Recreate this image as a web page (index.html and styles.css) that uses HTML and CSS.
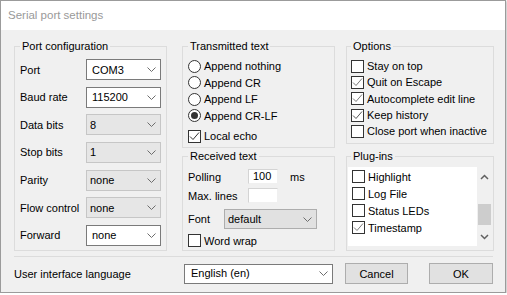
FILE: index.html
```html
<!DOCTYPE html>
<html lang="en">
<head>
  <meta charset="UTF-8">
  <title>Serial port settings</title>
  <link rel="stylesheet" href="styles.css">
</head>
<body>

  <div class="window">
    <div class="titlebar">Serial port settings</div>

    <div class="dialog">
      <div class="columns">

        <fieldset class="group group-port">
          <legend>Port configuration</legend>
          <div class="form-rows">
            <div class="form-row">
              <span class="label">Port</span>
              <div class="combo"><span>COM3</span><svg width="9" height="5" viewBox="0 0 9 5"><polyline points="0.5,0.5 4.5,4.5 8.5,0.5" fill="none" stroke="#6d6d6d"/></svg></div>
            </div>
            <div class="form-row">
              <span class="label">Baud rate</span>
              <div class="combo"><span>115200</span><svg width="9" height="5" viewBox="0 0 9 5"><polyline points="0.5,0.5 4.5,4.5 8.5,0.5" fill="none" stroke="#6d6d6d"/></svg></div>
            </div>
            <div class="form-row">
              <span class="label">Data bits</span>
              <div class="combo combo-off"><span>8</span><svg width="9" height="5" viewBox="0 0 9 5"><polyline points="0.5,0.5 4.5,4.5 8.5,0.5" fill="none" stroke="#6d6d6d"/></svg></div>
            </div>
            <div class="form-row">
              <span class="label">Stop bits</span>
              <div class="combo combo-off"><span>1</span><svg width="9" height="5" viewBox="0 0 9 5"><polyline points="0.5,0.5 4.5,4.5 8.5,0.5" fill="none" stroke="#6d6d6d"/></svg></div>
            </div>
            <div class="form-row">
              <span class="label">Parity</span>
              <div class="combo combo-off"><span>none</span><svg width="9" height="5" viewBox="0 0 9 5"><polyline points="0.5,0.5 4.5,4.5 8.5,0.5" fill="none" stroke="#6d6d6d"/></svg></div>
            </div>
            <div class="form-row">
              <span class="label">Flow control</span>
              <div class="combo combo-off"><span>none</span><svg width="9" height="5" viewBox="0 0 9 5"><polyline points="0.5,0.5 4.5,4.5 8.5,0.5" fill="none" stroke="#6d6d6d"/></svg></div>
            </div>
            <div class="form-row">
              <span class="label">Forward</span>
              <div class="combo"><span>none</span><svg width="9" height="5" viewBox="0 0 9 5"><polyline points="0.5,0.5 4.5,4.5 8.5,0.5" fill="none" stroke="#6d6d6d"/></svg></div>
            </div>
          </div>
        </fieldset>

        <div class="col col-mid">
          <fieldset class="group group-tx">
            <legend>Transmitted text</legend>
            <div class="option"><span class="radio"></span>Append nothing</div>
            <div class="option"><span class="radio"></span>Append CR</div>
            <div class="option"><span class="radio"></span>Append LF</div>
            <div class="option"><span class="radio on"></span>Append CR-LF</div>
            <div class="option echo">
              <span class="check"><svg width="11" height="11" viewBox="0 0 11 11"><polyline points="1,5.5 4,8.5 10,1.5" fill="none" stroke="#333"/></svg></span>Local echo
            </div>
          </fieldset>

          <fieldset class="group group-rx">
            <legend>Received text</legend>
            <div class="rx-row">
              <span class="rx-label">Polling</span>
              <span class="field">100</span>
              <span class="unit">ms</span>
            </div>
            <div class="rx-row rx-lines">
              <span class="rx-label">Max. lines</span>
              <span class="field"></span>
            </div>
            <div class="rx-row rx-font">
              <span class="rx-label font-label">Font</span>
              <div class="combo combo-btn"><span>default</span><svg width="9" height="5" viewBox="0 0 9 5"><polyline points="0.5,0.5 4.5,4.5 8.5,0.5" fill="none" stroke="#6d6d6d"/></svg></div>
            </div>
            <div class="option wrap"><span class="check"></span>Word wrap</div>
          </fieldset>
        </div>

        <div class="col col-right">
          <fieldset class="group group-options">
            <legend>Options</legend>
            <div class="option"><span class="check"></span>Stay on top</div>
            <div class="option"><span class="check"><svg width="11" height="11" viewBox="0 0 11 11"><polyline points="1,5.5 4,8.5 10,1.5" fill="none" stroke="#7a7a7a"/></svg></span>Quit on Escape</div>
            <div class="option"><span class="check"><svg width="11" height="11" viewBox="0 0 11 11"><polyline points="1,5.5 4,8.5 10,1.5" fill="none" stroke="#7a7a7a"/></svg></span>Autocomplete edit line</div>
            <div class="option"><span class="check"><svg width="11" height="11" viewBox="0 0 11 11"><polyline points="1,5.5 4,8.5 10,1.5" fill="none" stroke="#555"/></svg></span>Keep history</div>
            <div class="option"><span class="check"></span>Close port when inactive</div>
          </fieldset>

          <fieldset class="group group-plugins">
            <legend>Plug-ins</legend>
            <div class="listbox">
              <div class="list-items">
                <div class="list-item"><span class="check"></span>Highlight</div>
                <div class="list-item"><span class="check"></span>Log File</div>
                <div class="list-item"><span class="check"></span>Status LEDs</div>
                <div class="list-item"><span class="check"><svg width="11" height="11" viewBox="0 0 11 11"><polyline points="1,5.5 4,8.5 10,1.5" fill="none" stroke="#7a7a7a"/></svg></span>Timestamp</div>
              </div>
              <div class="scrollbar">
                <div class="scroll-btn"><svg width="9" height="6" viewBox="0 0 9 6"><polyline points="1,5 4.5,1.5 8,5" fill="none" stroke="#606060" stroke-width="1.5"/></svg></div>
                <div class="scroll-track"><div class="scroll-thumb"></div></div>
                <div class="scroll-btn"><svg width="9" height="6" viewBox="0 0 9 6"><polyline points="1,1 4.5,4.5 8,1" fill="none" stroke="#606060" stroke-width="1.5"/></svg></div>
              </div>
            </div>
          </fieldset>
        </div>

      </div>

      <div class="separator"></div>

      <div class="footer">
        <span class="footer-label">User interface language</span>
        <div class="combo combo-lang"><span>English (en)</span><svg width="9" height="5" viewBox="0 0 9 5"><polyline points="0.5,0.5 4.5,4.5 8.5,0.5" fill="none" stroke="#6d6d6d"/></svg></div>
        <button class="btn btn-cancel">Cancel</button>
        <button class="btn btn-ok">OK</button>
      </div>
    </div>
  </div>

</body>
</html>
```

FILE: styles.css
```css
* { box-sizing: border-box; }

body {
  margin: 0;
  font-family: "Liberation Sans", Arial, sans-serif;
  font-size: 11px;
  color: #000;
  background: #fff;
}

.window {
  width: 506px; height: 293px;
  border: 1px solid #9b9b9b;
  background: #f0f0f0;
  box-shadow: 1px 1px 2px rgba(0, 0, 0, 0.25);
}
.titlebar {
  height: 29px; line-height: 29px;
  padding-left: 7px;
  background: #fff; color: #999;
  font-size: 11.5px;
}
.dialog { padding: 10px 0 0 13px; }
.columns { display: flex; height: 211px; }
.col { display: flex; flex-direction: column; }
.col-mid { width: 153px; margin-left: 15px; gap: 2px; }
.col-right { width: 148px; margin-left: 11px; gap: 6px; }

/* group boxes */
.group {
  margin: 0; padding: 0 5px;
  border: 1px solid #dcdcdc;
  min-width: 0;
}
.group legend { padding: 0 2px; line-height: 13px; }
.group-port { width: 153px; height: 211px; padding-top: 6px; }
.group-tx { height: 108px; padding-top: 5px; }
.group-rx { height: 101px; padding-top: 6px; }
.group-options { height: 104px; padding: 5px 4px 0; }
.group-plugins { height: 101px; padding: 4px 1px 0; }
.group-plugins legend { margin-left: 3px; }

/* port configuration */
.form-rows { display: flex; flex-direction: column; gap: 6.67px; }
.form-row { display: flex; align-items: center; }
.label { width: 66px; }
.combo {
  display: flex; align-items: center; justify-content: space-between;
  width: 75px; height: 21px;
  padding: 0 4px 0 5px;
  background: #fff; border: 1px solid #7a7a7a;
}
.combo-off { background: #e6e6e6; border-color: #c6c6c6; padding-left: 3px; }
.combo-btn { width: 93px; height: 20px; background: #e1e1e1; border-color: #adadad; padding-left: 3px; }
.combo-lang { width: 149px; height: 20px; padding-left: 6px; }
.combo-lang span { margin-top: -1px; }

/* radios and checkboxes */
.option { display: flex; align-items: center; height: 16.5px; }
.group-options .option { height: 16.3px; }
.echo { margin-top: 4px; }
.wrap { margin-top: 5px; height: 13px; }
.radio, .check {
  flex: none;
  width: 13px; height: 13px;
  margin-right: 3px;
  border: 1px solid #333; background: #fff;
  display: flex; align-items: center; justify-content: center;
}
.radio { border-radius: 50%; }
.radio.on::after {
  content: ""; width: 7px; height: 7px;
  border-radius: 50%; background: #333;
}

/* received text */
.rx-row { display: flex; align-items: center; height: 15px; }
.rx-label { width: 60px; }
.rx-lines { margin-top: 4px; }
.rx-font { margin-top: 6px; height: 20px; }
.font-label { width: 36px; }
.field {
  width: 30px; height: 15px;
  padding-left: 4px; line-height: 13px;
  background: #fff;
  border: 1px solid #f0f0f0; border-top-color: #d4d4d4; border-left-color: #d4d4d4;
}
.unit { margin-left: 12px; }

/* plug-in list */
.listbox { display: flex; height: 79px; background: #fff; }
.list-items { flex: 1; padding: 1px 0 0 4px; }
.list-item { display: flex; align-items: center; height: 17px; }
.list-item .check { margin-right: 3px; }
.scrollbar { width: 15px; display: flex; flex-direction: column; background: #f0f0f0; }
.scroll-btn { height: 19px; display: flex; align-items: center; justify-content: center; }
.scroll-track { flex: 1; }
.scroll-thumb { margin: 18px 1px 0; height: 21px; background: #cdcdcd; }

/* bottom */
.separator { height: 1px; margin: 5px 12px 0 0; background: #dcdcdc; }
.footer { display: flex; align-items: center; margin-top: 6px; height: 21px; }
.footer-label { width: 170px; }
.btn {
  height: 21px; padding: 0;
  font: inherit; color: #000;
  background: #e1e1e1; border: 1px solid #adadad;
}
.btn-cancel { width: 63px; margin-left: 12px; }
.btn-ok { width: 64px; margin-left: 21px; }
```
